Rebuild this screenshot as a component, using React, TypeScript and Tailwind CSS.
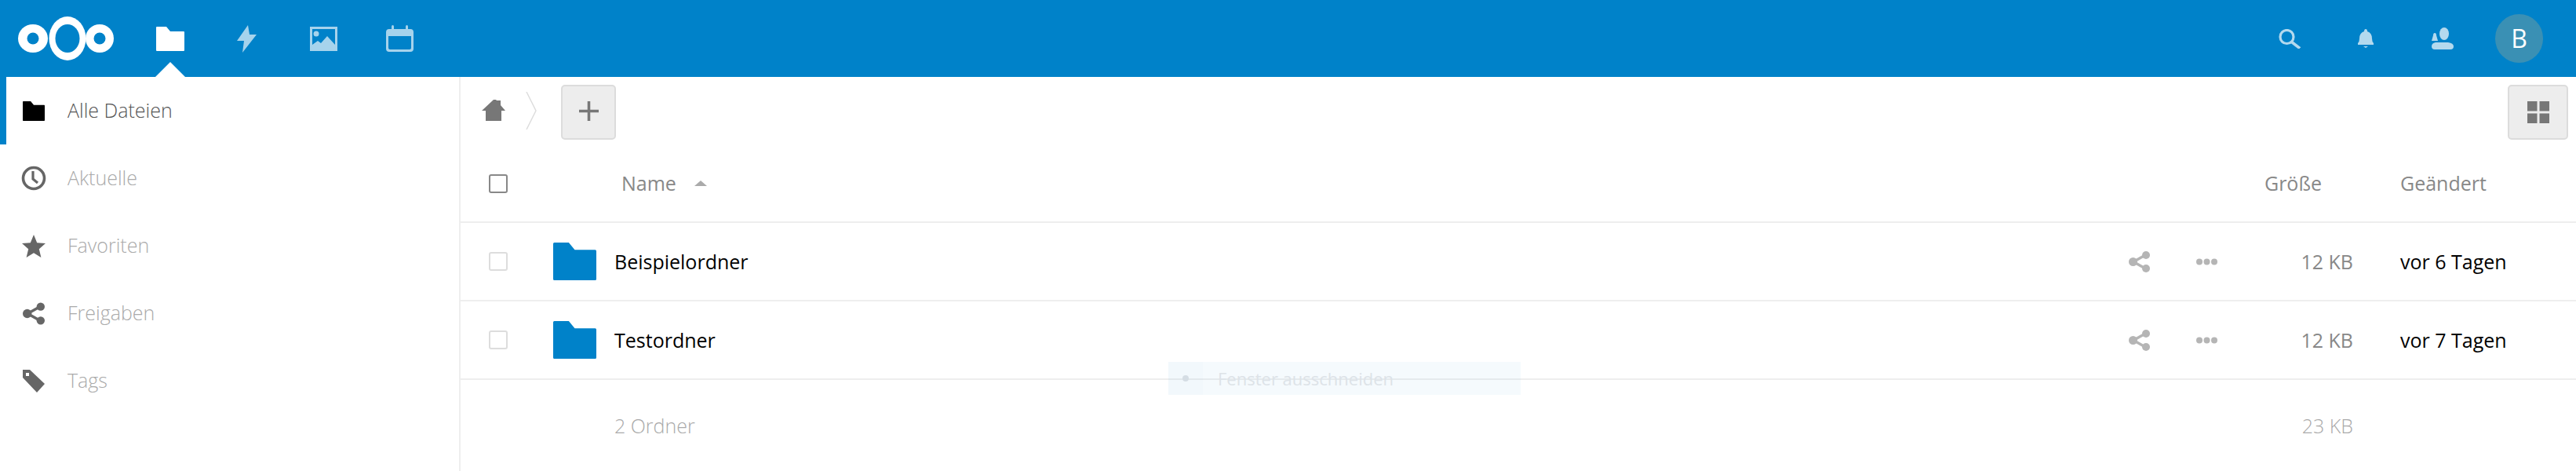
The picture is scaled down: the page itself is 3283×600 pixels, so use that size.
import React from "react";

const FolderShape = ({ className, fill }: { className: string; fill: string }) => (
  <svg viewBox="0 0 36 31" preserveAspectRatio="none" className={className}>
    <path d="M0 1q0-1 1-1h12l5 6h17q1 0 1 1v23q0 1-1 1H1q-1 0-1-1z" fill={fill} />
  </svg>
);

const Logo = () => (
  <svg viewBox="0 0 122 56" className="h-[56px] w-[122px]">
    <ellipse cx="19" cy="28" rx="19" ry="18" fill="#fff" />
    <ellipse cx="19" cy="28" rx="7.500" ry="7.500" fill="#0082c9" />
    <ellipse cx="104" cy="28" rx="18" ry="18" fill="#fff" />
    <ellipse cx="104" cy="28" rx="7.500" ry="7.500" fill="#0082c9" />
    <ellipse cx="63" cy="28" rx="23.500" ry="28" fill="#fff" />
    <ellipse cx="63" cy="28" rx="15.500" ry="18" fill="#0082c9" />
  </svg>
);

const ShareIcon = ({ className, fill }: { className: string; fill: string }) => (
  <svg viewBox="0 0 27 27" className={className}>
    <path d="M21 5 6 13.500 21 22" fill="none" stroke={fill} strokeWidth="3.400" />
    <circle cx="22" cy="5" r="5" fill={fill} />
    <circle cx="5.500" cy="13.500" r="5.500" fill={fill} />
    <circle cx="22" cy="22" r="5" fill={fill} />
  </svg>
);

const ClockIcon = () => (
  <svg viewBox="0 0 32 32" className="h-[32px] w-[32px]">
    <circle cx="16" cy="16" r="13.500" fill="none" stroke="#666" strokeWidth="3.600" />
    <path d="M15 7v10l6 5" fill="none" stroke="#666" strokeWidth="3.200" />
  </svg>
);

const StarIcon = () => (
  <svg viewBox="0 0 30 29" className="h-[29px] w-[30px]">
    <path d="m15 0 4.200 10.200L30 11l-8.200 7.200L24.400 29 15 23.200 5.600 29l2.600-10.800L0 11l10.800-.8z" fill="#666" />
  </svg>
);

const TagIcon = () => (
  <svg viewBox="0 0 28 30" className="h-[30px] w-[28px]">
    <path d="M0 1h9l19 18-10 11L0 11z" fill="#666" />
    <rect x="4" y="5" width="4" height="4" fill="#fff" />
  </svg>
);

const navItems = [
  { label: "Aktuelle", icon: <ClockIcon /> },
  { label: "Favoriten", icon: <StarIcon /> },
  { label: "Freigaben", icon: <ShareIcon className="h-[29px] w-[28px]" fill="#666" /> },
  { label: "Tags", icon: <TagIcon /> },
];

const files = [
  { name: "Beispielordner", date: "vor 6 Tagen" },
  { name: "Testordner", date: "vor 7 Tagen" },
];

export default function App() {
  return (
    <div className="relative h-[600px] w-[3283px] overflow-hidden bg-white font-['Open_Sans',sans-serif]">
      <header className="flex h-[98px] items-center bg-[#0082c9]">
        <div className="ml-[23px]"><Logo /></div>
        <div className="relative ml-[54px]">
          <FolderShape className="h-[31px] w-[36px]" fill="#fff" />
          <div className="absolute left-[-1px] top-[45px] h-0 w-0 border-x-[19px] border-b-[19px] border-x-transparent border-b-white" />
        </div>
        <svg viewBox="0 0 25 35" className="ml-[67px] h-[35px] w-[25px]">
          <path d="M14 0 0 20h9L7 35l18-23h-9z" fill="#fff" opacity=".65" />
        </svg>
        <svg viewBox="0 0 35 31" className="ml-[68px] h-[31px] w-[35px]" opacity=".65">
          <path fillRule="evenodd" d="M0 0h35v31H0zM3 3v25h29V3z" fill="#fff" />
          <circle cx="8" cy="9" r="3.500" fill="#fff" />
          <path d="M3 28v-5l7-5 4 3 8-9 10 11v5z" fill="#fff" />
        </svg>
        <svg viewBox="0 0 35 34" className="ml-[62px] h-[34px] w-[35px]" opacity=".65">
          <path fillRule="evenodd" d="M4 5h27q4 0 4 4v21q0 4-4 4H4q-4 0-4-4V9q0-4 4-4zM3 14v15q0 2 2 2h25q2 0 2-2V14z" fill="#fff" />
          <rect x="7" y="0" width="3" height="9" rx="1.500" fill="#fff" />
          <rect x="25" y="0" width="3" height="9" rx="1.500" fill="#fff" />
        </svg>

        <svg viewBox="0 0 28 25" className="ml-auto h-[25px] w-[28px]" opacity=".7">
          <ellipse cx="10.500" cy="10" rx="8.500" ry="8.500" fill="none" stroke="#fff" strokeWidth="3.200" />
          <path d="m16 16 11 8.500" stroke="#fff" strokeWidth="3.600" />
        </svg>
        <svg viewBox="0 0 20 24" className="ml-[73px] h-[24px] w-[20px]" opacity=".7">
          <path d="M10 0q2 0 2 3 6 2 6 9 0 4 2 6v2H0v-2q2-2 2-6 0-7 6-9 0-3 2-3z" fill="#fff" />
          <path d="M7 22h6l-3 2z" fill="#fff" />
        </svg>
        <svg viewBox="0 0 28 28" className="ml-[74px] h-[28px] w-[28px]" opacity=".7">
          <ellipse cx="16" cy="8" rx="6" ry="8" fill="#fff" />
          <path d="M4 28q-4 0-4-4 0-4 5-5h16q7 1 7 5 0 4-4 4z" fill="#fff" />
          <path d="M4 7q2 0 2 3l2 7H0l2-7q0-3 2-3z" fill="#fff" />
        </svg>
        <div className="ml-[53px] mr-[42px] flex h-[62px] w-[61px] items-center justify-center rounded-full bg-[#3a90b4] text-[32px] font-medium text-white">
          B
        </div>
      </header>

      <div className="flex h-[502px]">
        <aside className="w-[587px] shrink-0 border-r-2 border-[#eeeeee]">
          <div className="flex h-[86px] items-center gap-[29px] border-l-8 border-[#0082c9] pl-[21px]">
            <FolderShape className="h-[25px] w-[28px]" fill="#000" />
            <span className="text-[25px] font-light text-[#555]">Alle Dateien</span>
          </div>
          {navItems.map((item) => (
            <div key={item.label} className="flex h-[86px] items-center pl-[27px]">
              <div className="flex w-[32px] justify-center">{item.icon}</div>
              <span className="ml-[27px] text-[25px] font-light text-[#aaa]">{item.label}</span>
            </div>
          ))}
        </aside>

        <main className="min-w-0 flex-1">
          <div className="flex h-[87px] items-start pl-[27px] pr-[10px] pt-[10px]">
            <div className="flex h-[70px] items-center pb-[5px]">
              <svg viewBox="0 0 30 27" className="h-[27px] w-[30px]">
                <path d="M15 0h3l1 1h5v6l6 7h-5v13H5V14H0z" fill="#777" />
              </svg>
              <svg viewBox="0 0 14 48" className="ml-[26px] h-[48px] w-[14px]">
                <path d="m1 0 12 24L1 48" fill="none" stroke="#ddd" strokeWidth="1.500" />
              </svg>
            </div>
            <button className="ml-[31px] flex h-[70px] w-[70px] items-center justify-center rounded-[5px] border-2 border-[#dcdcdc] bg-[#ededed] pb-[3px]">
              <svg viewBox="0 0 24 24" className="h-[25px] w-[25px]">
                <path d="M12 0v24M0 12h24" stroke="#777" strokeWidth="3.400" />
              </svg>
            </button>
            <button className="ml-auto flex h-[70px] w-[77px] items-center justify-center rounded-[5px] border-2 border-[#dcdcdc] bg-[#ededed]">
              <svg viewBox="0 0 28 28" className="h-[28px] w-[28px]">
                <path d="M0 0h12.500v12.500H0zM15.500 0H28v12.500H15.500zM0 15.500h12.500V28H0zM15.500 15.500H28V28H15.500z" fill="#777" />
              </svg>
            </button>
          </div>

          <div className="flex h-[99px] items-center border-b-2 border-[#eeeeee] text-[25px] text-[#888]">
            <div className="ml-[36px] h-[24px] w-[24px] rounded-[3px] border-2 border-[#888]" />
            <span className="ml-[145px]">Name</span>
            <svg viewBox="0 0 16 7" className="ml-[23px] h-[7px] w-[16px]">
              <path d="M8 0l8 7H0z" fill="#aaa" />
            </svg>
            <span className="ml-auto">Größe</span>
            <span className="ml-[100px] w-[224px]">Geändert</span>
          </div>

          {files.map((f) => (
            <div key={f.name} className="flex h-[100px] items-center border-b-2 border-[#eeeeee] text-[25px]">
              <div className="ml-[36px] h-[24px] w-[24px] rounded-[3px] border-2 border-[#dddddd]" />
              <FolderShape className="ml-[58px] h-[48px] w-[55px]" fill="#0082c9" />
              <span className="ml-[23px] pt-[2px] text-black">{f.name}</span>
              <ShareIcon className="ml-auto h-[27px] w-[27px]" fill="#b5b5b5" />
              <svg viewBox="0 0 27 9" className="ml-[59px] h-[9px] w-[27px]">
                <circle cx="4" cy="4.500" r="4" fill="#b5b5b5" />
                <circle cx="13.500" cy="4.500" r="4" fill="#b5b5b5" />
                <circle cx="23" cy="4.500" r="4" fill="#b5b5b5" />
              </svg>
              <span className="w-[173px] pt-[2px] text-right text-[#888]">12 KB</span>
              <span className="ml-[60px] w-[224px] pt-[2px] text-black">{f.date}</span>
            </div>
          ))}

          <div className="flex h-[116px] items-center pt-[2px] text-[25px] font-light text-[#aaa]">
            <span className="ml-[196px]">2 Ordner</span>
            <span className="ml-auto mr-[284px]">23 KB</span>
          </div>
        </main>
      </div>

      <div className="absolute left-[1489px] top-[461px] flex h-[42px] w-[449px] items-center bg-[#0082c9]/4 text-[22px] text-[#dde3e8]">
        <div className="flex h-full w-[44px] items-center justify-center bg-[#0082c9]/1">
          <div className="h-[8px] w-[8px] rounded-full bg-[#d5dde4]" />
        </div>
        <span className="ml-[19px]">Fenster ausschneiden</span>
      </div>
    </div>
  );
}
